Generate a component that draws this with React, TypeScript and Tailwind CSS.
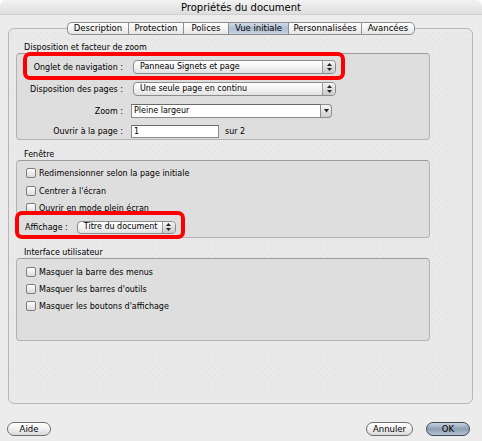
import React from "react";

function Stepper() {
  return (
    <div className="w-[13px] h-full border-l border-[#9a9a9a] bg-gradient-to-b from-[#f4f4f4] to-[#c9c9c9] rounded-r-[4px] flex items-center justify-center shrink-0">
      <svg width="5" height="8" viewBox="0 0 5 8">
        <path d="M2.5 0 L5 3 L0 3 Z" fill="#222" />
        <path d="M2.5 8 L5 5 L0 5 Z" fill="#222" />
      </svg>
    </div>
  );
}

function Check({ label }: { label: string }) {
  return (
    <div className="flex items-center h-[10px] pl-[9px]">
      <div className="w-[10px] h-[10px] rounded-[2px] border border-[#7d7d7d] bg-gradient-to-b from-[#fdfdfd] to-[#dcdcdc] shrink-0" />
      <span className="ml-[3px] text-[8px] leading-[11px] whitespace-nowrap">{label}</span>
    </div>
  );
}

const tabs = [
  { t: "Description", w: "w-[61px]" },
  { t: "Protection", w: "w-[55px]" },
  { t: "Polices", w: "w-[45px]" },
  { t: "Vue initiale", w: "w-[60px]" },
  { t: "Personnalisées", w: "w-[73px]" },
  { t: "Avancées", w: "w-[54px]" },
];

export default function App() {
  return (
    <div className="w-[482px] h-[441px] bg-white relative overflow-hidden font-['DejaVu_Sans',sans-serif] text-black">
      <div className="h-full rounded-t-[7px] bg-[#ececec] flex flex-col">
        <div className="h-[15px] rounded-t-[7px] bg-gradient-to-b from-[#f2f2f2] to-[#dedede] border-b border-[#d0d0d0] flex items-center justify-center text-[10px] leading-none pt-[1px]">
          Propriétés du document
        </div>

        <div className="flex justify-center mt-[7px] relative z-10">
          {tabs.map((tab, i) => {
            const sel = i === 3;
            return (
              <div
                key={tab.t}
                className={[
                  tab.w,
                  "h-[13px] flex items-center justify-center text-[8.5px] leading-none border-y border-[#8e8e8e] whitespace-nowrap",
                  i === 0 ? "border-l rounded-l-[5px]" : "border-l",
                  i === tabs.length - 1 ? "border-r rounded-r-[5px]" : "",
                  sel
                    ? "bg-gradient-to-b from-[#d3dde8] via-[#aebfd2] to-[#c7d4e2] border-[#6f7f92]"
                    : "bg-gradient-to-b from-[#ffffff] via-[#f2f2f2] to-[#e6e6e6]",
                ].join(" ")}
              >
                {tab.t}
              </div>
            );
          })}
        </div>

        <div className="ml-[8px] mr-[9px] -mt-[7px] h-[376px] border border-[#b7b7b7] rounded-[6px] bg-[#e9e9e9] bg-[radial-gradient(#dcdcdc_0.6px,transparent_0.7px)] bg-[length:7px_7px] pl-[7px] pt-[13px] flex flex-col">
          <div className="text-[8px] leading-[11px] pl-[8px]">Disposition et facteur de zoom</div>
          <div className="w-[414px] h-[87px] border border-[#b3b3b3] border-t-[#9c9c9c] rounded-[4px] bg-[#dedede] pt-[6px] flex flex-col">
            <div className="flex items-center h-[14px]">
              <div className="w-[106px] text-right text-[8px] leading-[11px] whitespace-nowrap">Onglet de navigation :</div>
              <div className="ml-[10px] w-[203px] h-[14px] rounded-[4px] border border-[#8c8c8c] bg-gradient-to-b from-[#ffffff] via-[#f3f3f3] to-[#e2e2e2] flex items-center">
                <span className="flex-1 pl-[6px] text-[8px] leading-none whitespace-nowrap">Panneau Signets et page</span>
                <Stepper />
              </div>
            </div>
            <div className="flex items-center h-[14px] mt-[8px]">
              <div className="w-[106px] text-right text-[8px] leading-[11px] whitespace-nowrap">Disposition des pages :</div>
              <div className="ml-[10px] w-[203px] h-[14px] rounded-[4px] border border-[#8c8c8c] bg-gradient-to-b from-[#ffffff] via-[#f3f3f3] to-[#e2e2e2] flex items-center">
                <span className="flex-1 pl-[6px] text-[8px] leading-none whitespace-nowrap">Une seule page en continu</span>
                <Stepper />
              </div>
            </div>
            <div className="flex items-center h-[14px] mt-[8px]">
              <div className="w-[106px] text-right text-[8px] leading-[11px]">Zoom :</div>
              <div className="ml-[8px] w-[201px] h-[14px] flex">
                <div className="flex-1 h-full bg-white border border-[#8a8a8a] border-t-[#6a6a6a] flex items-center pl-[2px] text-[8px] leading-none">Pleine largeur</div>
                <div className="w-[11px] h-full border border-l-0 border-[#8c8c8c] rounded-r-[4px] bg-gradient-to-b from-[#f6f6f6] to-[#cfcfcf] flex items-center justify-center">
                  <svg width="5" height="4" viewBox="0 0 5 4">
                    <path d="M0 0 L5 0 L2.5 3.5 Z" fill="#222" />
                  </svg>
                </div>
              </div>
            </div>
            <div className="flex items-center h-[13px] mt-[7px]">
              <div className="w-[106px] text-right text-[8px] leading-[11px] whitespace-nowrap">Ouvrir à la page :</div>
              <div className="ml-[8px] w-[88px] h-[13px] bg-white border border-[#8a8a8a] border-t-[#6a6a6a] flex items-center pl-[2px] text-[8px] leading-none">1</div>
              <div className="ml-[6px] text-[8px] leading-[11px]">sur 2</div>
            </div>
          </div>

          <div className="text-[8px] leading-[11px] pl-[8px] mt-[9px]">Fenêtre</div>
          <div className="w-[414px] h-[78px] border border-[#b3b3b3] border-t-[#9c9c9c] rounded-[4px] bg-[#dedede] pt-[7px] flex flex-col">
            <Check label="Redimensionner selon la page initiale" />
            <div className="mt-[8px]"><Check label="Centrer à l'écran" /></div>
            <div className="mt-[7px]"><Check label="Ouvrir en mode plein écran" /></div>
            <div className="flex items-center h-[12px] mt-[8px] pl-[8px]">
              <span className="text-[8px] leading-[11px] whitespace-nowrap">Affichage :</span>
              <div className="ml-[9px] w-[99px] h-[13px] rounded-[4px] border border-[#8c8c8c] bg-gradient-to-b from-[#ffffff] via-[#f3f3f3] to-[#e2e2e2] flex items-center">
                <span className="flex-1 pl-[6px] text-[8px] leading-none whitespace-nowrap">Titre du document</span>
                <Stepper />
              </div>
            </div>
          </div>

          <div className="text-[8px] leading-[11px] pl-[8px] mt-[9px]">Interface utilisateur</div>
          <div className="w-[414px] h-[83px] border border-[#b3b3b3] border-t-[#9c9c9c] rounded-[4px] bg-[#dedede] pt-[8px] flex flex-col">
            <Check label="Masquer la barre des menus" />
            <div className="mt-[7px]"><Check label="Masquer les barres d'outils" /></div>
            <div className="mt-[7px]"><Check label="Masquer les boutons d'affichage" /></div>
          </div>
        </div>

        <div className="flex items-center mt-[18px] pl-[7px] pr-[12px]">
          <div className="w-[44px] h-[14px] rounded-full border border-[#6e6e6e] bg-gradient-to-b from-[#ffffff] via-[#f0f0f0] to-[#dadada] flex items-center justify-center text-[8.5px] leading-none">Aide</div>
          <div className="flex-1" />
          <div className="w-[47px] h-[14px] rounded-full border border-[#6e6e6e] bg-gradient-to-b from-[#ffffff] via-[#f0f0f0] to-[#dadada] flex items-center justify-center text-[8.5px] leading-none">Annuler</div>
          <div className="ml-[13px] w-[44px] h-[14px] rounded-full border border-[#3f4a58] bg-gradient-to-b from-[#c8d2de] via-[#8d9fb4] to-[#b4c3d3] flex items-center justify-center text-[8.5px] leading-none">OK</div>
        </div>
      </div>

      <div className="absolute left-[23px] top-[52px] w-[322px] h-[28px] border-[4px] border-[#ff0000] rounded-[7px]" />
      <div className="absolute left-[15px] top-[211px] w-[170px] h-[28px] border-[4px] border-[#ff0000] rounded-[7px]" />
    </div>
  );
}
